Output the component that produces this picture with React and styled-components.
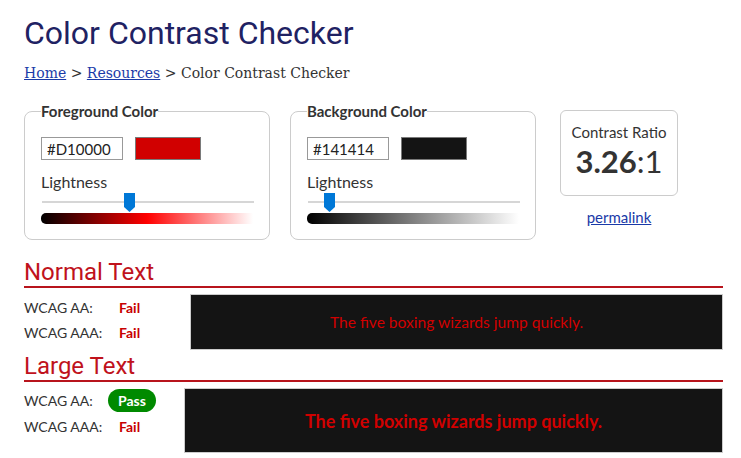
import React from "react";
import styled, { createGlobalStyle } from "styled-components";

const GlobalStyle = createGlobalStyle`
  body {
    margin: 0;
    background: #ffffff;
    font-family: "Lato", "Noto Sans", sans-serif;
    color: #333333;
  }
`;

const Page = styled.div`
  padding: 14px 18px 0 24px;
`;

const Title = styled.h1`
  margin: 0;
  font-family: Roboto, "Liberation Sans", sans-serif;
  font-weight: 400;
  font-size: 32px;
  line-height: 38px;
  color: #1f2263;
`;

const Crumbs = styled.div`
  margin-top: 13px;
  font-family: "DejaVu Serif", "Liberation Serif", serif;
  font-size: 14px;
  color: #333;
  a {
    color: #1a3aa8;
  }
`;

const ControlsRow = styled.div`
  display: flex;
  align-items: flex-start;
  margin-top: 21px;
`;

const Fieldset = styled.fieldset`
  width: 246px;
  box-sizing: border-box;
  margin: 0 20px 0 0;
  padding: 17px 16px 15px 16px;
  border: 1px solid #cccccc;
  border-radius: 8px;
  min-inline-size: 0;
`;

const Legend = styled.legend`
  padding: 0;
  font-size: 15px;
  font-weight: 700;
  color: #333;
`;

const InputRow = styled.div`
  display: flex;
  align-items: center;
  gap: 12px;
`;

const HexInput = styled.input`
  width: 82px;
  height: 23px;
  box-sizing: border-box;
  border: 1px solid #999;
  padding: 0 5px;
  font-family: "Lato", "Noto Sans", sans-serif;
  font-size: 15px;
  color: #222;
`;

const Swatch = styled.div`
  width: 66px;
  height: 23px;
  box-sizing: border-box;
  border: 1px solid #7a7a7a;
  background: ${(p) => p.$color};
`;

const Label = styled.div`
  margin-top: 12px;
  font-size: 16px;
  line-height: 20px;
  color: #333;
`;

const Slider = styled.div`
  position: relative;
  height: 18px;
  margin-top: 1px;
  &::before {
    content: "";
    position: absolute;
    left: 1px;
    right: -1px;
    top: 8px;
    height: 2px;
    background: #d6d6d6;
  }
`;

const Thumb = styled.svg`
  position: absolute;
  top: 0;
  display: block;
`;

const Gradient = styled.div`
  height: 11px;
  margin-top: 2px;
  border-radius: 5px 0 0 5px;
  background: ${(p) => p.$bg};
`;

const RatioColumn = styled.div`
  margin: 8px 0 0 4px;
  width: 118px;
  display: flex;
  flex-direction: column;
  align-items: center;
`;

const RatioBox = styled.div`
  width: 118px;
  height: 86px;
  box-sizing: border-box;
  border: 1px solid #cccccc;
  border-radius: 6px;
  text-align: center;
  padding-top: 12px;
`;

const RatioLabel = styled.div`
  font-size: 15px;
  color: #333;
`;

const RatioValue = styled.div`
  margin-top: 1px;
  font-size: 31px;
  line-height: 38px;
  color: #333;
  b {
    font-weight: 700;
  }
`;

const Permalink = styled.a`
  margin-top: 12px;
  font-size: 15px;
  color: #1a3aa8;
`;

const SectionTitle = styled.h2`
  margin: ${(p) => p.$top}px 0 0;
  font-family: Roboto, "Liberation Sans", sans-serif;
  font-weight: 400;
  font-size: 24px;
  line-height: 27px;
  color: #c0121c;
  border-bottom: 2px solid #b8141c;
`;

const ResultRow = styled.div`
  display: flex;
  margin-top: ${(p) => p.$top}px;
`;

const Results = styled.div`
  width: ${(p) => p.$width}px;
  flex-shrink: 0;
`;

const Result = styled.div`
  display: flex;
  align-items: center;
  height: ${(p) => p.$h}px;
  font-size: 14px;
  color: #333;
`;

const ResultName = styled.span`
  width: 84px;
`;

const Fail = styled.span`
  margin-left: 11px;
  font-weight: 700;
  color: #c80000;
`;

const Pass = styled.span`
  display: inline-flex;
  align-items: center;
  justify-content: center;
  height: 23px;
  padding: 0 10px;
  border-radius: 12px;
  background: #008a00;
  color: #ffffff;
  font-weight: 700;
`;

const Sample = styled.div`
  flex: 1;
  height: ${(p) => p.$h}px;
  box-sizing: border-box;
  border: 1px solid #cccccc;
  background: #141414;
  color: #d10000;
  display: flex;
  align-items: center;
  justify-content: center;
  font-size: ${(p) => p.$size}px;
  font-weight: ${(p) => (p.$bold ? 700 : 400)};
`;

function ColorPicker({ legend, hex, color, thumbX, gradient }) {
  return (
    <Fieldset>
      <Legend>{legend}</Legend>
      <InputRow>
        <HexInput defaultValue={hex} />
        <Swatch $color={color} />
      </InputRow>
      <Label>Lightness</Label>
      <Slider>
        <Thumb width="11" height="19" viewBox="0 0 11 19" style={{ left: thumbX }}>
          <path d="M0 0 H11 V14 L5.5 19 L0 14 Z" fill="#0078d7" />
        </Thumb>
      </Slider>
      <Gradient $bg={gradient} />
    </Fieldset>
  );
}

export default function App() {
  return (
    <Page>
      <GlobalStyle />
      <Title>Color Contrast Checker</Title>
      <Crumbs>
        <a href="#">Home</a> &gt; <a href="#">Resources</a> &gt; Color Contrast Checker
      </Crumbs>
      <ControlsRow>
        <ColorPicker
          legend="Foreground Color"
          hex="#D10000"
          color="#d10000"
          thumbX={83}
          gradient="linear-gradient(to right, #000000, #ff0000 50%, #ffffff)"
        />
        <ColorPicker
          legend="Background Color"
          hex="#141414"
          color="#141414"
          thumbX={17}
          gradient="linear-gradient(to right, #000000, #ffffff)"
        />
        <RatioColumn>
          <RatioBox>
            <RatioLabel>Contrast Ratio</RatioLabel>
            <RatioValue>
              <b>3.26</b>:1
            </RatioValue>
          </RatioBox>
          <Permalink href="#">permalink</Permalink>
        </RatioColumn>
      </ControlsRow>

      <SectionTitle $top={19}>Normal Text</SectionTitle>
      <ResultRow $top={6}>
        <Results $width={166}>
          <Result $h={26}>
            <ResultName>WCAG AA:</ResultName>
            <Fail>Fail</Fail>
          </Result>
          <Result $h={25}>
            <ResultName>WCAG AAA:</ResultName>
            <Fail>Fail</Fail>
          </Result>
        </Results>
        <Sample $h={56} $size={15.6}>
          The five boxing wizards jump quickly.
        </Sample>
      </ResultRow>

      <SectionTitle $top={3}>Large Text</SectionTitle>
      <ResultRow $top={6}>
        <Results $width={160}>
          <Result $h={25}>
            <ResultName>WCAG AA:</ResultName>
            <Pass>Pass</Pass>
          </Result>
          <Result $h={26}>
            <ResultName>WCAG AAA:</ResultName>
            <Fail>Fail</Fail>
          </Result>
        </Results>
        <Sample $h={65} $size={18} $bold>
          The five boxing wizards jump quickly.
        </Sample>
      </ResultRow>
    </Page>
  );
}
